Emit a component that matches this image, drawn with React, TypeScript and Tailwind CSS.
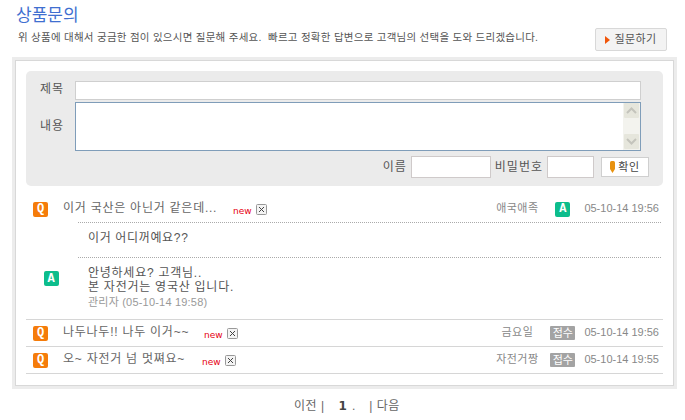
import React from 'react';

const font = { fontFamily: '"Liberation Sans", "Noto Sans CJK KR", sans-serif' };

const QBadge = () => (
    <span className="flex h-[15px] w-[15px] items-center justify-center rounded-[2px] bg-[#f57c0a] font-['Liberation_Mono'] text-[12px] font-bold leading-none text-white">
        Q
    </span>
);

const ABadge = () => (
    <span className="flex h-[15px] w-[15px] items-center justify-center rounded-[2px] bg-[#0cbd8c] font-['Liberation_Mono'] text-[12px] font-bold leading-none text-white">
        A
    </span>
);

const CloseBox = () => (
    <svg width="11" height="11" viewBox="0 0 11 11" className="block">
        <rect x="0.5" y="0.5" width="10" height="10" rx="1" fill="#f4f4f4" stroke="#999999" />
        <path d="M3 3l5 5M8 3l-5 5" stroke="#444444" strokeWidth="1" />
    </svg>
);

const NewMark = () => <span className="font-['DejaVu_Sans'] text-[9px] leading-none text-[#e60012]">new</span>;

const Status = () => (
    <span className="flex h-[14px] w-[25px] items-center justify-center rounded-[1px] bg-[#a3a3a3] text-[11px] leading-none text-white">
        접수
    </span>
);

interface RowProps {
    title: string;
    titleWidth: string;
    author: string;
    date: string;
    badge: React.ReactNode;
}

const Row = ({ title, titleWidth, author, date, badge }: RowProps) => (
    <div className="flex h-[27px] items-center border-b border-[#d6d6d6] pl-[7px] pr-[4px]">
        <QBadge />
        <span className={`mb-[2px] ml-[15px] whitespace-nowrap text-[12px] tracking-[0.75px] text-[#666666] ${titleWidth}`}>{title}</span>
        <span className="ml-[14px]">
            <NewMark />
        </span>
        <span className="ml-[4px]">
            <CloseBox />
        </span>
        <span className="mb-[2px] ml-auto w-[44px] text-center text-[11px] tracking-[0.5px] text-[#888888]">{author}</span>
        <span className="ml-[11px] flex w-[25px] justify-center">{badge}</span>
        <span className="mb-[2px] ml-[9px] text-[11px] text-[#888888]">{date}</span>
    </div>
);

const Scrollbar = () => (
    <div className="flex w-[17px] flex-col justify-between bg-[#f3f3ee] pb-[1px] pl-[1px]">
        <div className="flex h-[15px] w-[15px] items-center justify-center rounded-[1px] bg-[#e6e6dc]">
            <svg width="11" height="7" viewBox="0 0 11 7">
                <path d="M1 6l4.5-4.5L10 6" fill="none" stroke="#c4c4bc" strokeWidth="2" />
            </svg>
        </div>
        <div className="flex h-[15px] w-[15px] items-center justify-center rounded-[1px] bg-[#e6e6dc]">
            <svg width="11" height="7" viewBox="0 0 11 7">
                <path d="M1 1l4.5 4.5L10 1" fill="none" stroke="#c4c4bc" strokeWidth="2" />
            </svg>
        </div>
    </div>
);

const App: React.FC = () => {
    return (
        <div className="h-[420px] w-[685px] overflow-hidden bg-white" style={font}>
            {/* heading */}
            <div className="flex h-[57px] pl-[16px] pr-[18px]">
                <div>
                    <h1 className="pt-[5px] text-[17px] leading-[22px] text-[#3f6fd0]">상품문의</h1>
                    <p className="ml-[2px] mt-[2px] text-[10.5px] leading-[16px] tracking-[0.26px] text-[#555555]">
                        위 상품에 대해서 궁금한 점이 있으시면 질문해 주세요.&nbsp; 빠르고 정확한 답변으로 고객님의 선택을 도와 드리겠습니다.
                    </p>
                </div>
                <button className="ml-auto mt-[28px] flex h-[23px] w-[72px] items-center justify-center gap-[4px] rounded-[2px] border border-[#d8d8d8] bg-[#f3f3f3] text-[11px] tracking-[0.4px] text-[#555555]">
                    <svg width="5" height="8" viewBox="0 0 5 8">
                        <path d="M0 0l5 4-5 4z" fill="#f0560a" />
                    </svg>
                    질문하기
                </button>
            </div>

            {/* main box */}
            <div className="mx-[12px] h-[332px] w-[665px] bg-[#ececec] p-[3px]">
                <div className="h-full border border-[#d8d8d8] bg-white px-[10px] pt-[10px]">
                    {/* form */}
                    <div className="mb-[10px] h-[115px] rounded-[5px] bg-[#ebebeb] pl-[14px] pr-[22px] pt-[10px]">
                        <div className="flex">
                            <label className="w-[35px] pt-[1px] text-[12px] leading-[14px] tracking-[1px] text-[#555555]">제목</label>
                            <input className="h-[19px] flex-1 border border-[#cfcfcf] bg-white" />
                        </div>
                        <div className="mt-[2px] flex">
                            <label className="w-[35px] pt-[17px] text-[12px] leading-[14px] tracking-[1px] text-[#555555]">내용</label>
                            <div className="flex h-[49px] flex-1 border border-[#7f9db9] bg-white">
                                <textarea className="flex-1 resize-none outline-none" />
                                <Scrollbar />
                            </div>
                        </div>
                        <div className="-mr-[8px] mt-[5px] flex items-center justify-end text-[12px] text-[#555555]">
                            <span className="tracking-[1px]">이름</span>
                            <input className="ml-[4px] h-[22px] w-[80px] border border-[#cfcaca] bg-white" />
                            <span className="ml-[4px] tracking-[1px]">비밀번호</span>
                            <input className="ml-[4px] h-[22px] w-[47px] border border-[#cfcaca] bg-white" />
                            <button className="ml-[7px] flex h-[20px] w-[48px] items-center justify-center gap-[3px] border border-[#cfcfcf] bg-white text-[11px] tracking-[0.6px] text-[#444444]">
                                <svg width="5" height="12" viewBox="0 0 5 12">
                                    <path d="M0 1.5Q0 0 1.5 0h2Q5 0 5 1.5V8L2.5 12 0 8z" fill="#e8920e" />
                                </svg>
                                확인
                            </button>
                        </div>
                    </div>

                    {/* list */}
                    <Row title="이거 국산은 아닌거 같은데..." titleWidth="w-[156px]" author="애국애족" date="05-10-14 19:56" badge={<ABadge />} />
                    <div className="-mt-[1px] h-[98px] border-b border-[#d6d6d6] bg-white pl-[52px] pr-[2px]">
                        <div className="h-[36px] border-y border-dotted border-[#aaaaaa] pl-[10px] pt-[7px] text-[12px] leading-[16px] tracking-[0.65px] text-[#555555]">
                            이거 어디꺼예요??
                        </div>
                        <div className="relative pl-[10px] pt-[8px] text-[12px] leading-[14px] tracking-[0.75px] text-[#555555]">
                            <span className="absolute -left-[34px] top-[13px]">
                                <ABadge />
                            </span>
                            <p>안녕하세요? 고객님..</p>
                            <p>본 자전거는 영국산 입니다.</p>
                            <p className="mt-[1px] text-[11px] tracking-[0.2px] text-[#999999]">관리자 (05-10-14 19:58)</p>
                        </div>
                    </div>
                    <Row title="나두나두!! 나두 이거~~" titleWidth="w-[127px]" author="금요일" date="05-10-14 19:56" badge={<Status />} />
                    <Row title="오~ 자전거 넘 멋쪄요~" titleWidth="w-[125px]" author="자전거짱" date="05-10-14 19:55" badge={<Status />} />
                </div>
            </div>

            {/* pager */}
            <div className="ml-[294px] mt-[10px] flex items-center text-[12px] leading-[14px] text-[#666666]">
                <span className="tracking-[0.5px]">이전 |</span>
                <span className="ml-[14px] font-['DejaVu_Sans'] text-[12px] font-bold text-[#444444]">1</span>
                <span className="ml-[5px]">.</span>
                <span className="ml-[14px] tracking-[0.5px]">| 다음</span>
            </div>
        </div>
    );
};

export default App;
